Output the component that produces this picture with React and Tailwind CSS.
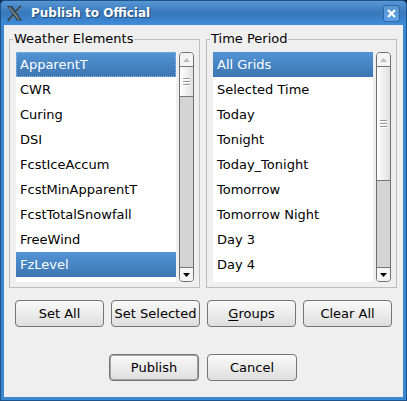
import { useState } from "react";

const elements = [
  "ApparentT",
  "CWR",
  "Curing",
  "DSI",
  "FcstIceAccum",
  "FcstMinApparentT",
  "FcstTotalSnowfall",
  "FreeWind",
  "FzLevel",
];

const periods = [
  "All Grids",
  "Selected Time",
  "Today",
  "Tonight",
  "Today_Tonight",
  "Tomorrow",
  "Tomorrow Night",
  "Day 3",
  "Day 4",
];

function ScrollBar({ thumbClass, label }) {
  return (
    <div
      role="group"
      aria-label={label}
      className="flex w-[15px] shrink-0 flex-col overflow-hidden rounded-[4px] border border-[#707070] bg-[#d4d4d4]"
    >
      <button
        type="button"
        aria-label="Scroll up"
        className="flex h-[14px] shrink-0 items-center justify-center border-b border-[#777] bg-[#f4f4f4]"
      >
        <svg width="7" height="4" viewBox="0 0 7 4" className="fill-[#bdbdbd]">
          <path d="M3.5 0 7 4H0z" />
        </svg>
      </button>
      <div
        className={`flex shrink-0 items-center justify-center border-b border-[#777] bg-linear-to-r from-white to-[#e0e0e0] ${thumbClass}`}
      >
        <svg width="7" height="8" viewBox="0 0 7 8" shapeRendering="crispEdges">
          <path d="M0 .5h7M0 3.5h7M0 6.5h7" stroke="#999" />
          <path d="M0 1.5h7M0 4.5h7M0 7.5h7" stroke="#fff" />
        </svg>
      </div>
      <button
        type="button"
        aria-label="Scroll down"
        className="mt-auto flex h-[14px] shrink-0 items-center justify-center border-t border-[#777] bg-[#f6f6f6]"
      >
        <svg width="7" height="4" viewBox="0 0 7 4" className="fill-black">
          <path d="M0 0h7L3.5 4z" />
        </svg>
      </button>
    </div>
  );
}

function ListPanel({ title, items, initial, focused, thumbClass, multiple }) {
  const [selected, setSelected] = useState(initial);
  const choose = (item) => {
    if (!multiple) {
      setSelected([item]);
    } else if (selected.includes(item)) {
      setSelected(selected.filter((s) => s !== item));
    } else {
      setSelected([...selected, item]);
    }
  };
  return (
    <fieldset className="min-w-0 border border-[#bdbdbd] px-[5px] pb-[5px]">
      <legend className="-ml-[2px] px-px leading-4">{title}</legend>
      <div className="flex gap-[3px] pt-[5px] pl-px">
        <ul
          role="listbox"
          aria-label={title}
          aria-multiselectable={multiple}
          className="h-[230px] min-w-0 flex-1 overflow-hidden bg-white"
        >
          {items.map((item) => (
            <li
              key={item}
              role="option"
              aria-selected={selected.includes(item)}
              onClick={() => choose(item)}
              className={`h-[25px] truncate border border-dotted pl-[3px] leading-[23px] ${
                selected.includes(item)
                  ? "bg-linear-to-b from-[#5294d5] to-[#3d76b2] bg-origin-border text-white"
                  : ""
              } ${item === focused ? "border-[#8fbce8]" : "border-transparent"}`}
            >
              {item}
            </li>
          ))}
        </ul>
        <ScrollBar thumbClass={thumbClass} label={`${title} scroll bar`} />
      </div>
    </fieldset>
  );
}

function PushButton({ children, className = "", isDefault = false }) {
  return (
    <button
      type="button"
      className={`h-[27px] rounded-[4px] border border-[#757575] bg-linear-to-b from-[#f9f9f9] to-[#dedede] text-center leading-[25px] whitespace-nowrap ${
        isDefault ? "inset-ring inset-ring-[#a3a3a3]" : ""
      } ${className}`}
    >
      {children}
    </button>
  );
}

export default function App() {
  return (
    <div className="bg-[#122c48] font-['DejaVu_Sans',sans-serif] text-[13px] text-black">
      <div className="overflow-hidden rounded-t-[5px] border border-[#1d528a] bg-[#3d87cf]">
        <header className="flex h-6 items-center bg-linear-to-b from-[#5796d4] via-[#3878bb] to-[#3e8cdc] pr-[6px] pl-[5px]">
          <svg width="17" height="17" viewBox="0 0 17 17" aria-hidden="true">
            <path d="M15 1 9.6 7.3M7.4 9.8 2 16" stroke="#34424e" strokeWidth="2.4" />
            <path d="M1 1h5.2L16 15.5h-5z" fill="#34424d" />
            <path d="M3.4 2.2 13 14.5" stroke="#7b8b92" strokeWidth="1.4" />
            <path d="M15.4 1.5 9.8 8.2M7.6 10.8 3 16.2" stroke="#8098a8" strokeWidth=".8" />
          </svg>
          <h1 className="ml-2 flex-1 truncate text-xs font-bold text-white [text-shadow:1px_1px_1px_#1d4776]">
            Publish to Official
          </h1>
          <button
            type="button"
            aria-label="Close"
            className="flex size-[17px] items-center justify-center rounded-[3px] border border-[#3166a0] bg-linear-to-b from-[#5a96d5] to-[#5b9fe5]"
          >
            <svg width="9" height="9" viewBox="0 0 9 9" aria-hidden="true">
              <path d="m1 1 7 7M8 1 1 8" stroke="#fff" strokeWidth="2.2" />
            </svg>
          </button>
        </header>
        <main className="mx-[3px] mb-[3px] bg-[#efefef] pt-[6px] pb-4">
          <div className="grid grid-cols-2 gap-[6px] pr-[6px] pl-[5px]">
            <ListPanel
              title="Weather Elements"
              items={elements}
              initial={["ApparentT", "FzLevel"]}
              focused="ApparentT"
              thumbClass="h-[30px]"
              multiple
            />
            <ListPanel
              title="Time Period"
              items={periods}
              initial={["All Grids"]}
              thumbClass="h-[114px]"
            />
          </div>
          <div className="mt-3 grid grid-cols-4 gap-[7px] px-[11px]">
            <PushButton>Set All</PushButton>
            <PushButton>Set Selected</PushButton>
            <PushButton>
              <span className="underline underline-offset-2">G</span>roups
            </PushButton>
            <PushButton>Clear All</PushButton>
          </div>
          <div className="mt-[27px] flex justify-center gap-2 pr-px">
            <PushButton className="w-[90px]" isDefault>
              Publish
            </PushButton>
            <PushButton className="w-[90px]">Cancel</PushButton>
          </div>
        </main>
      </div>
    </div>
  );
}
